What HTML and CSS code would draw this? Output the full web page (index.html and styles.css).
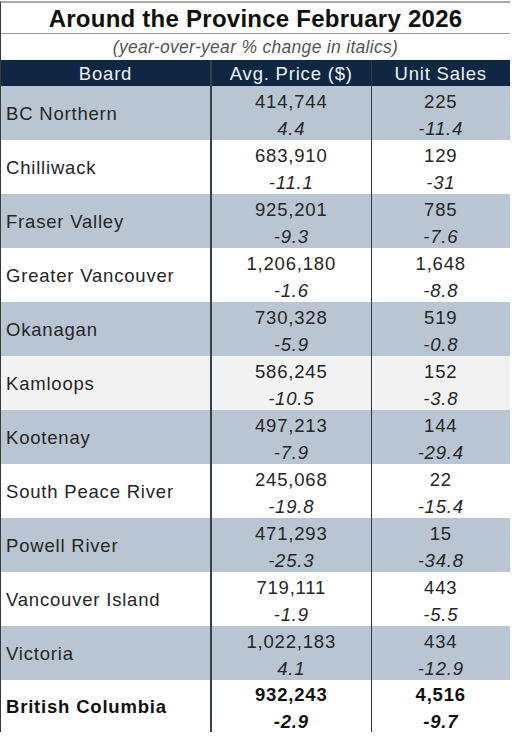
FILE: index.html
```html
<!DOCTYPE html>
<html>
<head>
<meta charset="utf-8">
<link rel="stylesheet" href="styles.css">
</head>
<body>
<div class="sheet">
  <div class="title">Around the Province February 2026</div>
  <div class="subtitle">(year-over-year % change in italics)</div>
  <table class="grid">
    <thead>
      <tr><th class="c1">Board</th><th class="c2">Avg. Price ($)</th><th class="c3">Unit Sales</th></tr>
    </thead>
    <tbody>
      <tr class="shade"><td class="name">BC Northern</td><td><div class="stack"><div>414,744</div><div class="pct">4.4</div></div></td><td><div class="stack"><div>225</div><div class="pct">-11.4</div></div></td></tr>
      <tr><td class="name">Chilliwack</td><td><div class="stack"><div>683,910</div><div class="pct">-11.1</div></div></td><td><div class="stack"><div>129</div><div class="pct">-31</div></div></td></tr>
      <tr class="shade"><td class="name">Fraser Valley</td><td><div class="stack"><div>925,201</div><div class="pct">-9.3</div></div></td><td><div class="stack"><div>785</div><div class="pct">-7.6</div></div></td></tr>
      <tr><td class="name">Greater Vancouver</td><td><div class="stack"><div>1,206,180</div><div class="pct">-1.6</div></div></td><td><div class="stack"><div>1,648</div><div class="pct">-8.8</div></div></td></tr>
      <tr class="shade"><td class="name">Okanagan</td><td><div class="stack"><div>730,328</div><div class="pct">-5.9</div></div></td><td><div class="stack"><div>519</div><div class="pct">-0.8</div></div></td></tr>
      <tr class="light"><td class="name">Kamloops</td><td><div class="stack"><div>586,245</div><div class="pct">-10.5</div></div></td><td><div class="stack"><div>152</div><div class="pct">-3.8</div></div></td></tr>
      <tr class="shade"><td class="name">Kootenay</td><td><div class="stack"><div>497,213</div><div class="pct">-7.9</div></div></td><td><div class="stack"><div>144</div><div class="pct">-29.4</div></div></td></tr>
      <tr><td class="name">South Peace River</td><td><div class="stack"><div>245,068</div><div class="pct">-19.8</div></div></td><td><div class="stack"><div>22</div><div class="pct">-15.4</div></div></td></tr>
      <tr class="shade"><td class="name">Powell River</td><td><div class="stack"><div>471,293</div><div class="pct">-25.3</div></div></td><td><div class="stack"><div>15</div><div class="pct">-34.8</div></div></td></tr>
      <tr><td class="name">Vancouver Island</td><td><div class="stack"><div>719,111</div><div class="pct">-1.9</div></div></td><td><div class="stack"><div>443</div><div class="pct">-5.5</div></div></td></tr>
      <tr class="shade"><td class="name">Victoria</td><td><div class="stack"><div>1,022,183</div><div class="pct">4.1</div></div></td><td><div class="stack"><div>434</div><div class="pct">-12.9</div></div></td></tr>
      <tr class="total"><td class="name">British Columbia</td><td><div class="stack"><div>932,243</div><div class="pct">-2.9</div></div></td><td><div class="stack"><div>4,516</div><div class="pct">-9.7</div></div></td></tr>
    </tbody>
  </table>
</div>
</body>
</html>
```

FILE: styles.css
```css
html, body {
  margin: 0;
  padding: 0;
  background: #ffffff;
}
body {
  font-family: "Liberation Sans", Arial, sans-serif;
  color: #262626;
}
.sheet {
  width: 509px;
  margin-top: 1px;
  border-top: 2px solid #a6a6a6;
  border-left: 1px solid #3a3a3a;
}
.title {
  height: 30px;
  line-height: 31px;
  text-align: center;
  font-size: 24px;
  letter-spacing: 0.25px;
  font-weight: bold;
  color: #111111;
  border-bottom: 1px solid #9a9a9a;
}
.subtitle {
  height: 26px;
  line-height: 27px;
  text-align: center;
  font-size: 17.5px;
  letter-spacing: 0.3px;
  font-style: italic;
  color: #555555;
}
.grid {
  width: 509px;
  border-collapse: collapse;
  table-layout: fixed;
  font-size: 18.5px;
  letter-spacing: 0.8px;
}
.grid th {
  background: #0f2742;
  color: #eef1f4;
  font-weight: normal;
  height: 26px;
  padding: 2px 0 0 0;
  line-height: 24px;
  box-sizing: border-box;
}
.c1 { width: 210px; }
.c2 { width: 160px; }
.grid td {
  padding: 2px 0 0 0;
  height: 54px;
  box-sizing: border-box;
  text-align: center;
  line-height: 27px;
  vertical-align: top;
}
.stack {
  height: 52px;
}
.grid td + td,
.grid th + th {
  border-left: 1px solid #333b45;
}
.grid td:nth-child(2),
.grid th:nth-child(2) {
  border-left: 2px solid #3b4148;
}
.grid td.name {
  text-align: left;
  padding: 0 0 0 5px;
  vertical-align: middle;
}
.pct {
  font-style: italic;
}
.shade td {
  background: #b9c5d2;
}
.light td {
  background: #f2f2f2;
}
.total td {
  font-weight: bold;
  color: #111111;
  height: 52px;
  padding-top: 1px;
}
.total .stack {
  height: 51px;
}
```
